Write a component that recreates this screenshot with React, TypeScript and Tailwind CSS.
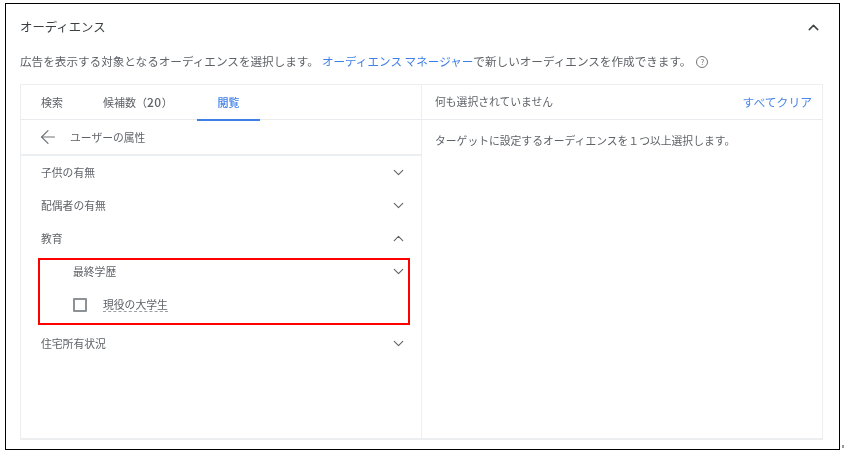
import { ArrowLeft, ChevronDown, ChevronUp } from 'lucide-react';

const font = { fontFamily: '"Noto Sans CJK JP", "Noto Sans", sans-serif' };

function Row({ label, open, indent }: { label: string; open?: boolean; indent?: boolean }) {
    const Icon = open ? ChevronUp : ChevronDown;
    return (
        <div className={`flex items-center justify-between h-[33px] pr-[14px] ${indent ? 'pl-[52px]' : 'pl-[20px]'}`}>
            <span className="text-[10.8px] text-[#5f6368]">{label}</span>
            <Icon className="w-[17px] h-[17px] text-[#5f6368]" strokeWidth={1.6} />
        </div>
    );
}

export default function App() {
    return (
        <div className="w-[844px] h-[455px] bg-white pt-[3px] pl-[5px]" style={font}>
            <div className="relative w-[835px] h-[447px] border border-[#000] pl-[14px] pr-[15px] pt-[12px]">
                <div className="blur-[0.45px]">
                    {/* Header */}
                    <div className="flex items-center justify-between h-[22px] pr-[2px]">
                        <h2 className="text-[12.4px] font-normal text-[#3c4043]">オーディエンス</h2>
                        <ChevronUp className="w-[17px] h-[17px] text-[#3c4043]" strokeWidth={2} />
                    </div>

                    <div className="flex items-center h-[22px] mt-[13px] text-[11.6px] whitespace-nowrap text-[#5f6368]">
                        <span>広告を表示する対象となるオーディエンスを選択します。</span>
                        <span className="text-[#3f7fe8] ml-[3px]">オーディエンス マネージャー</span>
                        <span>で新しいオーディエンスを作成できます。</span>
                        <span className="ml-[5px] flex items-center justify-center w-[12px] h-[12px] rounded-full border border-[#757575] text-[8px] leading-none text-[#757575]">?</span>
                    </div>

                    {/* Panel */}
                    <div className="flex w-[803px] h-[356px] mt-[11px] border border-[#eceef0] border-b-2">
                        <div className="w-[401px] border-r border-[#eceef0]">
                            <div className="flex items-stretch h-[35px] border-b border-[#e8eaed] text-[11px] text-[#5f6368]">
                                <div className="flex items-center pl-[20px] w-[82px]">検索</div>
                                <div className="flex items-center w-[94px]">
                                    候補数（<span className="font-medium text-[12px] tracking-[0.5px]">20</span>）
                                </div>
                                <div className="relative flex items-center justify-center w-[63px] text-[#3f7fe8] font-medium">
                                    閲覧
                                    <div className="absolute left-0 right-0 bottom-[-2px] h-[2px] bg-[#3f7fe8]" />
                                </div>
                            </div>
                            <div className="flex items-center h-[36px] pl-[16px] border-b-2 border-[#eceff1] text-[10.8px] text-[#5f6368]">
                                <ArrowLeft className="w-[22px] h-[22px] text-[#6f7377]" strokeWidth={1.3} />
                                <span className="ml-[11px]">ユーザーの属性</span>
                            </div>
                            <Row label="子供の有無" />
                            <Row label="配偶者の有無" />
                            <Row label="教育" open />
                            <Row label="最終学歴" indent />
                            <div className="flex items-center h-[33px] pl-[52px]">
                                <span className="w-[14px] h-[14px] rounded-[1px] border-2 border-[#8d9296]" />
                                <span className="ml-[16px] text-[10.8px] text-[#5f6368] border-b border-dashed border-[#9aa0a6] leading-[14px]">現役の大学生</span>
                            </div>
                            <div className="mt-[6px]">
                                <Row label="住宅所有状況" />
                            </div>
                        </div>
                        <div className="flex-1">
                            <div className="flex items-center justify-between h-[35px] pb-[1px] pl-[13px] pr-[10px] border-b border-[#e8eaed] text-[10.8px]">
                                <span className="text-[#5f6368]">何も選択されていません</span>
                                <span className="text-[#4a86ea] text-[11.8px]">すべてクリア</span>
                            </div>
                            <p className="pl-[13px] pt-[12px] text-[10.8px] text-[#5f6368]">ターゲットに設定するオーディエンスを１つ以上選択します。</p>
                        </div>
                    </div>
                </div>

                {/* Red annotation box */}
                <div className="absolute left-[32px] top-[254px] w-[372px] h-[67px] border-2 border-[#f00]" />
                <div className="absolute left-[836px] top-[441px] w-[2px] h-[3px] bg-[#999]" />
            </div>
        </div>
    );
}
